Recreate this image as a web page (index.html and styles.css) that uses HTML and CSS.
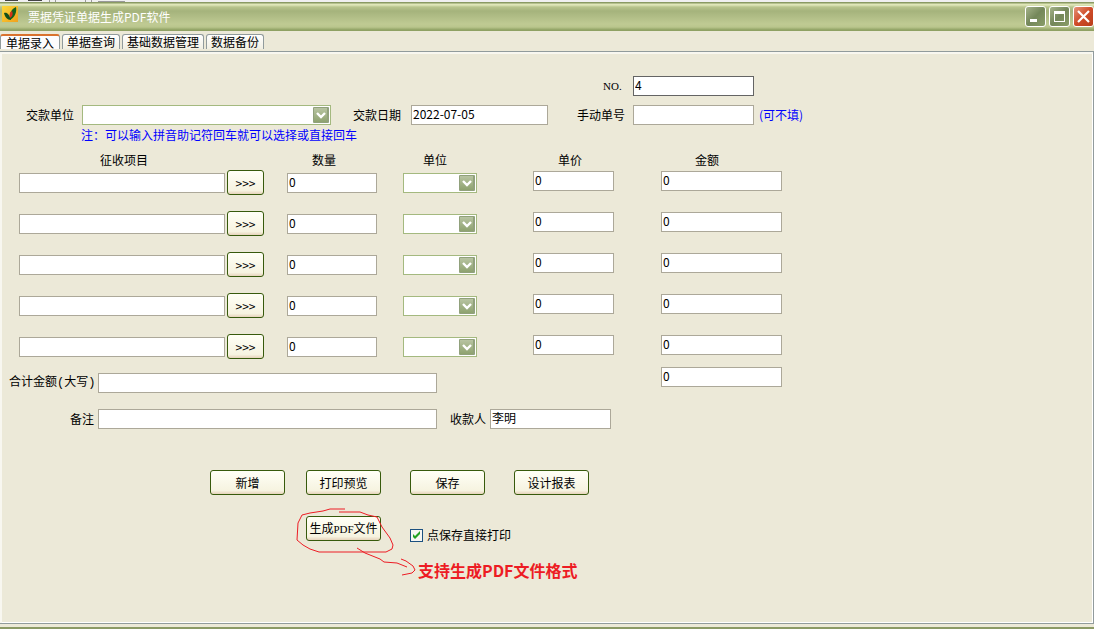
FILE: index.html
```html
<!DOCTYPE html>
<html lang="zh-CN">
<head>
<meta charset="utf-8">
<title>票据凭证单据生成PDF软件</title>
<link rel="stylesheet" href="styles.css">
</head>
<body>
<div class="backdrop">
  <svg width="140" height="2" aria-hidden="true">
    <path d="M5 0h13v1H5zM28 0h14v1H28z" fill="#444"/>
    <path d="M49 0h1v2h-1zM55 0h1v2h-1zM85 0h1v2h-1zM91 0h1v2h-1zM98 1h27v1H98z" fill="#999"/>
  </svg>
</div>
<div class="window">
  <header class="titlebar">
    <svg class="app-icon" viewBox="0 0 16 16" aria-hidden="true">
      <defs><linearGradient id="gold" x1="0" y1="0" x2="1" y2="1"><stop offset="0" stop-color="#fbd83c"/><stop offset="1" stop-color="#f0a01c"/></linearGradient></defs>
      <rect width="16" height="16" fill="url(#gold)"/>
      <path d="M2 7c3-1 5 1 7 7-4 0-6-3-7-7z" fill="#12501a"/>
      <path d="M8 14C7 8 9 3 14 1c1 5-1 10-6 13z" fill="#12601c"/>
      <path d="M8 12c-1-4 0-6 2-7 1 3 1 5-2 7z" fill="#d8301a"/>
    </svg>
    <h1 class="title">票据凭证单据生成PDF软件</h1>
    <div class="window-controls">
      <button class="control" aria-label="最小化"><svg viewBox="0 0 19 19"><path d="M4 12h7v3H4z" fill="#fff"/></svg></button>
      <button class="control" aria-label="最大化"><svg viewBox="0 0 19 19"><path d="M4 4h11v11H4zM5 7v7h9V7z" fill="#fff" fill-rule="evenodd"/></svg></button>
      <button class="control control-close" aria-label="关闭"><svg viewBox="0 0 19 19"><path d="M4 4l11 11M15 4L4 15" stroke="#fff" stroke-width="2.2"/></svg></button>
    </div>
  </header>
  <nav class="tabs">
    <button class="tab tab-active">单据录入</button>
    <button class="tab">单据查询</button>
    <button class="tab">基础数据管理</button>
    <button class="tab">数据备份</button>
  </nav>
  <main class="page">
    <form class="form">
      <div class="header-fields">
        <label class="number-label" for="no">NO.</label>
        <input class="field field-strong" id="no" value="4">
        <label class="payer-label" for="payer">交款单位</label>
        <select class="combo" id="payer"><option></option></select>
        <label class="date-label" for="date">交款日期</label>
        <input class="field" id="date" value="2022-07-05">
        <label class="manual-label" for="manual">手动单号</label>
        <input class="field" id="manual">
        <span class="hint">(可不填)</span>
      </div>
      <p class="note">注：可以输入拼音助记符回车就可以选择或直接回车</p>

      <div class="line-head">
        <span>征收项目</span><span>数量</span><span>单位</span><span>单价</span><span>金额</span>
      </div>
      <div class="lines">
        <div class="line">
          <input class="field" aria-label="征收项目 1"><button type="button" class="button">&gt;&gt;&gt;</button>
          <input class="field" aria-label="数量 1" value="0"><select class="combo" aria-label="单位 1"><option></option></select>
          <input class="field field-top" aria-label="单价 1" value="0"><input class="field field-top" aria-label="金额 1" value="0">
        </div>
        <div class="line">
          <input class="field" aria-label="征收项目 2"><button type="button" class="button">&gt;&gt;&gt;</button>
          <input class="field" aria-label="数量 2" value="0"><select class="combo" aria-label="单位 2"><option></option></select>
          <input class="field field-top" aria-label="单价 2" value="0"><input class="field field-top" aria-label="金额 2" value="0">
        </div>
        <div class="line">
          <input class="field" aria-label="征收项目 3"><button type="button" class="button">&gt;&gt;&gt;</button>
          <input class="field" aria-label="数量 3" value="0"><select class="combo" aria-label="单位 3"><option></option></select>
          <input class="field field-top" aria-label="单价 3" value="0"><input class="field field-top" aria-label="金额 3" value="0">
        </div>
        <div class="line">
          <input class="field" aria-label="征收项目 4"><button type="button" class="button">&gt;&gt;&gt;</button>
          <input class="field" aria-label="数量 4" value="0"><select class="combo" aria-label="单位 4"><option></option></select>
          <input class="field field-top" aria-label="单价 4" value="0"><input class="field field-top" aria-label="金额 4" value="0">
        </div>
        <div class="line">
          <input class="field" aria-label="征收项目 5"><button type="button" class="button">&gt;&gt;&gt;</button>
          <input class="field" aria-label="数量 5" value="0"><select class="combo" aria-label="单位 5"><option></option></select>
          <input class="field field-top" aria-label="单价 5" value="0"><input class="field field-top" aria-label="金额 5" value="0">
        </div>
      </div>

      <div class="summary">
        <label class="summary-label" for="total-text">合计金额<span class="mono">(</span>大写<span class="mono">)</span></label>
        <input class="field" id="total-text">
        <input class="field total" aria-label="合计金额" value="0">
        <label class="summary-label" for="remark">备注</label>
        <input class="field" id="remark">
        <label class="summary-label" for="payee">收款人</label>
        <input class="field" id="payee" value="李明">
      </div>

      <div class="actions">
        <button type="button" class="button">新增</button>
        <button type="button" class="button">打印预览</button>
        <button type="button" class="button">保存</button>
        <button type="button" class="button">设计报表</button>
      </div>
      <div class="actions output">
        <div class="generate">
          <button type="button" class="button">生成<span class="latin">PDF</span>文件</button>
          <svg class="scribble" width="124" height="72" viewBox="0 0 124 72" aria-hidden="true">
            <path d="M48 1H33l-7 2-13 2-8 2-4 8-1 17 6 5 7 4 9 3h67l6-3 1-4-3-7-8-11-5-10-9-2-8-3H42"/>
            <path d="M60 40l8 5 15 6 4 3 13 1 10 4M104 51l5 2 7 5 2 4-3 3-10 2"/>
          </svg>
        </div>
        <label class="print-option"><input class="check" type="checkbox" checked>点保存直接打印</label>
        <p class="callout">支持生成PDF文件格式</p>
      </div>
    </form>
  </main>
</div>
</body>
</html>
```
FILE: styles.css
```css
* { box-sizing: border-box; }
body {
  margin: 0;
  min-height: 100vh;
  display: flex;
  flex-direction: column;
  background: #ece9d8;
  color: #000;
  font: 12px/16px "Noto Sans CJK SC", sans-serif;
}
button, input, select { margin: 0; font: inherit; color: inherit; }
h1, p { margin: 0; font: inherit; }
.backdrop { height: 2px; background: #f0f0f0; }
.backdrop svg { display: block; }
.window { flex: 1; display: flex; flex-direction: column; border-bottom: 2px solid #8c9a66; }

.titlebar {
  display: flex;
  align-items: center;
  height: 29px;
  padding-left: 2px;
  background: linear-gradient(#8a9a63 0 1px, #dfe6b8 2px 3px, #b8c48c 5px, #a5b37c 9px, #bfca93 22px, #bac68d 25px, #8fa163 28px);
  color: #fff;
}
.app-icon { width: 16px; height: 16px; margin-bottom: 5px; }
.title { margin-left: 10px; flex: 1; }
.window-controls { display: flex; gap: 3px; }
.control {
  width: 21px;
  height: 21px;
  padding: 0;
  border: 1px solid #fff;
  border-radius: 3px;
  background: linear-gradient(135deg, #a5b38a, #74875a 50%, #8a9d68);
}
.control svg { display: block; }
.control-close { background: linear-gradient(135deg, #e59478, #cf4b28 50%, #b93f1c); }

.tabs { display: flex; gap: 2px; height: 20px; padding: 3px 0 2px; }
.tab {
  padding: 0 4px;
  border: 1px solid #919b9c;
  border-width: 1px 1px 0;
  border-radius: 3px 3px 0 0;
  background: linear-gradient(#fff, #f1efe2);
  line-height: 14px;
}
.tab-active { padding: 0 5px; border-top: 2px solid #d9722e; background: #fcfcfe; line-height: 13px; }

.page {
  flex: 1;
  margin-bottom: 3px;
  border: 1px solid #919b9c;
  border-left: 0;
  box-shadow: inset 2px 2px #f8f7f0, inset -1px -1px #fff;
}
.form { max-width: 820px; padding: 24px 0 0 9px; }

.field {
  width: 100%;
  height: 20px;
  padding: 0 1px 3px;
  border: 1px solid #aca899;
  background: #fff;
  line-height: 15px;
}
.field-strong { border-color: #646464; }
.combo {
  appearance: none;
  width: 100%;
  height: 20px;
  border: 1px solid #a4b97f;
  border-radius: 0;
  background: #fff url("data:image/svg+xml,%3Csvg xmlns='http://www.w3.org/2000/svg' width='16' height='16'%3E%3Cdefs%3E%3ClinearGradient id='g' x2='0' y2='1'%3E%3Cstop stop-color='%23b8c4a2'/%3E%3Cstop offset='1' stop-color='%238ea26f'/%3E%3C/linearGradient%3E%3C/defs%3E%3Crect width='16' height='16' rx='1' fill='%2391a17c'/%3E%3Crect x='1' y='1' width='13' height='14' fill='url(%23g)'/%3E%3Cpath d='M4 6l4 4 4-4' fill='none' stroke='%23fff' stroke-width='2.4'/%3E%3C/svg%3E") no-repeat right 1px center;
}
.button {
  height: 25px;
  padding: 0;
  border: 1px solid #375a0c;
  border-radius: 3px;
  background: linear-gradient(#fffff6, #f6f3e0 85%, #e6d3bb);
}
.latin, .number-label { font-family: "Liberation Serif", serif; font-size: 11px; }
.mono { font-family: "Liberation Mono", monospace; }

.header-fields {
  display: grid;
  grid-template-columns: 63px 249px 80px 137px 85px 121px 60px;
  row-gap: 9px;
  align-items: center;
  padding-left: 10px;
}
.number-label { grid-column: 5; padding-left: 55px; }
.payer-label { grid-column: 1; padding-left: 7px; }
.date-label { padding-left: 22px; }
.manual-label { padding-left: 29px; }
.hint { padding-left: 5px; color: #00f; }
.note { padding: 2px 0 0 72px; color: #00f; }

.line-head {
  display: grid;
  grid-template-columns: 212px 111px 135px 137px 40px;
  padding: 9px 0 2px 91px;
}
.lines { display: grid; row-gap: 16px; padding-left: 10px; }
.line {
  display: grid;
  grid-template-columns: 206px 2px 37px 23px 90px 26px 74px 56px 81px 47px 121px;
  align-items: center;
}
.line > :nth-child(2) { grid-column: 3; }
.line > :nth-child(3) { grid-column: 5; }
.line > :nth-child(4) { grid-column: 7; }
.line > :nth-child(5) { grid-column: 9; }
.line > :nth-child(6) { grid-column: 11; }
.field-top { align-self: start; margin-top: 1px; }

.summary {
  display: grid;
  grid-template-columns: 89px 339px 53px 121px 50px 121px;
  grid-template-rows: 26px 20px;
  row-gap: 16px;
  align-items: end;
  padding-top: 8px;
}
.summary-label { padding-right: 4px; line-height: 20px; text-align: right; white-space: nowrap; }
.total { grid-column: 6; align-self: start; }

.actions {
  display: grid;
  grid-template-columns: 96px 104px 104px 75px;
  padding: 41px 0 0 201px;
}
.actions .button { width: 75px; }
.output { row-gap: 16px; padding-top: 21px; }
.generate { grid-column: 2; position: relative; }
.scribble {
  position: absolute;
  left: -9px;
  top: -8px;
  overflow: visible;
  fill: none;
  stroke: #ed1c24;
  stroke-width: 1;
  pointer-events: none;
}
.print-option {
  grid-column: 3 / 5;
  display: flex;
  align-items: center;
  gap: 4px;
  padding-top: 11px;
}
.check {
  appearance: none;
  width: 13px;
  height: 13px;
  margin: 0;
  border: 1px solid #1c5180;
  background: #f6f6f2;
}
.check:checked {
  background: #f6f6f2 url("data:image/svg+xml,%3Csvg xmlns='http://www.w3.org/2000/svg' width='11' height='11'%3E%3Cpath d='M2 4v3l2 2 5-5V1L4 6z' fill='%2321a121'/%3E%3C/svg%3E") center no-repeat;
}
.callout {
  grid-column: 3 / 5;
  padding-left: 8px;
  color: #ed1c24;
  font-size: 16px;
  font-weight: 700;
  line-height: 22px;
  white-space: nowrap;
}
```
